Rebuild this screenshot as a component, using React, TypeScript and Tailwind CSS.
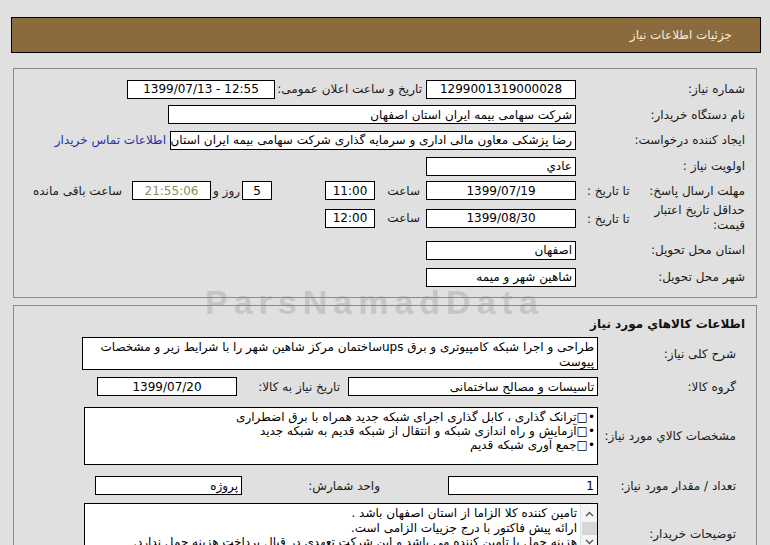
const box =
  'border border-black bg-white h-[19px] flex items-center px-[3px] overflow-hidden whitespace-nowrap shrink-0'

function Label({ children, className = '' }: { children: React.ReactNode; className?: string }) {
  return <div className={'shrink-0 text-[#1a1a1a] whitespace-nowrap ' + className}>{children}</div>
}

function ScrollBar() {
  return (
    <div className="w-[17px] shrink-0 flex flex-col items-center bg-[#f4f4f4] border-l border-[#e2e2e2]">
      <svg width="9" height="14" viewBox="0 0 9 14" className="mt-[3px]">
        <path d="M1 9 L4.5 5.5 L8 9" fill="none" stroke="#555" strokeWidth="1.4" />
      </svg>
      <div className="w-[15px] h-[13px] bg-[#d6d6d6] mt-[1px]" />
      <svg width="9" height="14" viewBox="0 0 9 14">
        <path d="M1 5 L4.5 8.5 L8 5" fill="none" stroke="#555" strokeWidth="1.4" />
      </svg>
    </div>
  )
}

export default function App() {
  return (
    <div
      dir="rtl"
      className="relative w-[770px] h-[545px] overflow-hidden bg-[#e0e0e0] pt-[17px] text-[12px] leading-none"
      style={{ fontFamily: '"DejaVu Sans", Tahoma, sans-serif' }}
    >
      {/* header */}
      <div className="mr-[9px] ml-[11px] h-[36px] bg-[#8b6b3e] border border-black flex items-center pr-[28px] text-[#f4ecd9]">
        جزئیات اطلاعات نیاز
      </div>

      {/* panel 1 */}
      <div className="mr-[13px] ml-[13px] mt-[15px] h-[230px] border border-[#8a8a8a] pt-[7px] pr-[11px]">
        <div className="flex items-center h-[26px]">
          <Label className="w-[169px]">شماره نیاز:</Label>
          <div className={box + ' w-[150px] justify-center'}>1299001319000028</div>
          <Label className="w-[151px] pr-[4px]">تاریخ و ساعت اعلان عمومی:</Label>
          <div className={box + ' w-[148px] justify-center'} dir="ltr">1399/07/13 - 12:55</div>
        </div>

        <div className="flex items-center h-[25px]">
          <Label className="w-[169px]">نام دستگاه خریدار:</Label>
          <div className={box + ' w-[408px]'}>شرکت سهامی بیمه ایران استان اصفهان</div>
        </div>

        <div className="flex items-center h-[26px]">
          <Label className="w-[169px]">ایجاد کننده درخواست:</Label>
          <div className={box + ' w-[406px]'}>
            رضا پزشکی معاون مالی اداری و سرمایه گذاری شرکت سهامی بیمه ایران استان اصفهان
          </div>
          <a className="mr-[4px] text-[#2233aa] whitespace-nowrap cursor-pointer">اطلاعات تماس خریدار</a>
        </div>

        <div className="flex items-center h-[26px]">
          <Label className="w-[169px]">اولویت نیاز :</Label>
          <div className={box + ' w-[150px]'}>عادي</div>
        </div>

        <div className="flex items-center h-[23px]">
          <div className="w-[169px] shrink-0 flex items-center justify-between pl-[11px]">
            <Label>مهلت ارسال پاسخ:</Label>
            <Label>تا تاریخ :</Label>
          </div>
          <div className={box + ' w-[150px] justify-center'}>1399/07/19</div>
          <Label className="w-[51px] pr-[6px]">ساعت</Label>
          <div className={box + ' w-[50px] justify-center'}>11:00</div>
          <div className="w-[53px] shrink-0" />
          <div className={box + ' w-[30px] justify-center'}>5</div>
          <Label className="w-[31px] text-center">روز و</Label>
          <div className={box + ' w-[79px] justify-center bg-[#efefc4] text-[#8b8b62] border-[#9a9a80]'}>21:55:06</div>
          <Label className="pr-[10px]">ساعت باقی مانده</Label>
        </div>

        <div className="flex items-center h-[32px]">
          <div className="w-[169px] shrink-0 flex items-center justify-between pl-[11px]">
            <Label className="leading-[15px]">
              حداقل تاریخ اعتبار
              <br />
              قیمت:
            </Label>
            <Label className="pt-[2px]">تا تاریخ :</Label>
          </div>
          <div className={box + ' w-[150px] justify-center'}>1399/08/30</div>
          <Label className="w-[51px] pr-[6px]">ساعت</Label>
          <div className={box + ' w-[50px] justify-center'}>12:00</div>
        </div>

        <div className="flex items-center h-[32px]">
          <Label className="w-[169px]">استان محل تحویل:</Label>
          <div className={box + ' w-[150px]'}>اصفهان</div>
        </div>

        <div className="flex items-center h-[22px]">
          <Label className="w-[169px]">شهر محل تحویل:</Label>
          <div className={box + ' w-[150px]'}>شاهین شهر و میمه</div>
        </div>
      </div>

      {/* panel 2 */}
      <div className="mr-[13px] ml-[13px] mt-[7px] h-[260px] border border-[#8a8a8a] pt-[9px] pr-[11px]">
        <div className="h-[18px] flex items-center font-bold text-[#111]">اطلاعات کالاهاي مورد نیاز</div>

        <div className="flex items-center mt-[4px]">
          <Label className="w-[147px] pr-[9px]">شرح کلی نیاز:</Label>
          <div className="border border-black bg-white w-[516px] h-[33px] px-[3px] pt-[2px] leading-[15px] shrink-0">
            طراحی و اجرا شبکه کامپیوتری و برق upsساختمان مرکز شاهین شهر  را با شرایط زیر و مشخصات پیوست
          </div>
        </div>

        <div className="flex items-center mt-[7px]">
          <Label className="w-[147px] pr-[9px]">گروه کالا:</Label>
          <div className={box + ' w-[250px]'}>تاسیسات و مصالح ساختمانی</div>
          <Label className="w-[111px] pr-[8px]">تاریخ نیاز به کالا:</Label>
          <div className={box + ' w-[140px] justify-center'}>1399/07/20</div>
        </div>

        <div className="flex items-center mt-[11px]">
          <Label className="w-[147px] pr-[9px]">مشخصات کالاي مورد نیاز:</Label>
          <div className="border border-black bg-white w-[514px] h-[58px] px-[2px] pt-[2px] leading-[14px] shrink-0">
            <div>•□ترانک گذاری ، کابل گذاری اجرای شبکه جدید همراه با برق اضطراری</div>
            <div>•□آزمایش و راه اندازی شبکه و انتقال از شبکه قدیم به شبکه جدید</div>
            <div>•□جمع آوری شبکه قدیم</div>
          </div>
        </div>

        <div className="flex items-center mt-[11px]">
          <Label className="w-[147px] pr-[9px]">تعداد / مقدار مورد نیاز:</Label>
          <div className={box + ' w-[150px] h-[17px]'}>1</div>
          <Label className="w-[206px] pr-[68px]">واحد شمارش:</Label>
          <div className={box + ' w-[147px] h-[17px]'}>پروژه</div>
        </div>

        <div className="flex items-start mt-[8px]">
          <Label className="w-[147px] pr-[9px] pt-[25px]">توضیحات خریدار:</Label>
          <div className="border border-black bg-white w-[514px] h-[60px] flex shrink-0">
            <ScrollBar />
            <div className="flex-1 px-[3px] pt-[2px] leading-[14.5px] overflow-hidden whitespace-nowrap">
              <div>تامین کننده کلا الزاما از استان اصفهان باشد .</div>
              <div>ارائه پیش فاکتور با درج جزییات  الزامی است.</div>
              <div>هزینه حمل با تامین کننده می باشد و این شرکت تعهدی در قبال پرداخت هزینه حمل ندارد.</div>
            </div>
          </div>
        </div>
      </div>

      {/* watermark */}
      <div
        className="absolute left-[205px] top-[285px] text-[34px] tracking-[6px] font-bold text-[#8c8c8c] opacity-[0.3] pointer-events-none"
        dir="ltr"
        style={{ fontFamily: '"Liberation Sans", Arial, sans-serif' }}
      >
        ParsNamadData
      </div>
    </div>
  )
}
